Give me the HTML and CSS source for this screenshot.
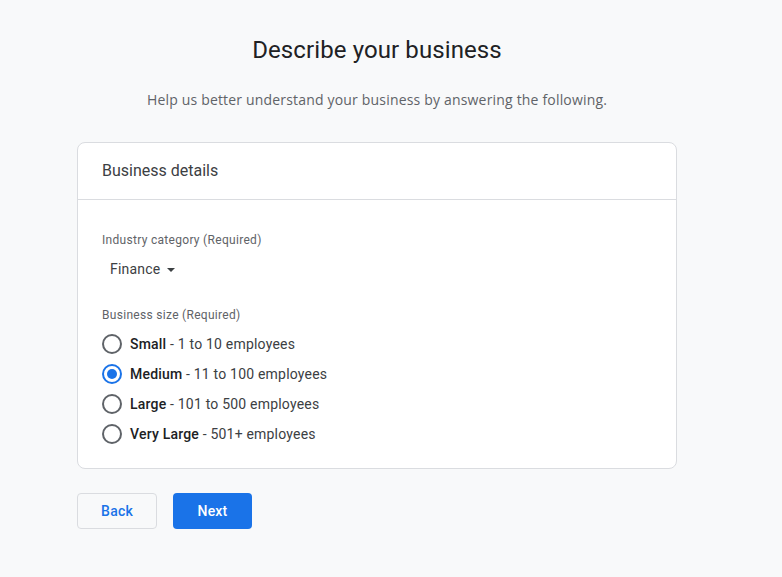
FILE: index.html
```html
<!DOCTYPE html>
<html>
<head>
<meta charset="utf-8">
<link rel="stylesheet" href="styles.css">
</head>
<body>
<main class="page">
  <h1 class="title">Describe your business</h1>
  <p class="subtitle">Help us better understand your business by answering the following.</p>
  <section class="card">
    <div class="card-header">Business details</div>
    <div class="card-body">
      <div class="label">Industry category (Required)</div>
      <div class="dropdown">Finance <span class="caret"></span></div>
      <div class="label label-size">Business size (Required)</div>
      <div class="radios">
        <label class="radio-row"><span class="radio"></span><span class="opt"><b>Small</b> - 1 to 10 employees</span></label>
        <label class="radio-row"><span class="radio checked"></span><span class="opt"><b>Medium</b> - 11 to 100 employees</span></label>
        <label class="radio-row"><span class="radio"></span><span class="opt"><b>Large</b> - 101 to 500 employees</span></label>
        <label class="radio-row"><span class="radio"></span><span class="opt"><b>Very Large</b> - 501+ employees</span></label>
      </div>
    </div>
  </section>
  <div class="actions">
    <button class="btn btn-back">Back</button>
    <button class="btn btn-next">Next</button>
  </div>
</main>
</body>
</html>
```
FILE: styles.css
```css
html, body {
  margin: 0;
  padding: 0;
  background: #f8f9fa;
  font-family: Roboto, "Liberation Sans", sans-serif;
  color: #202124;
}
.page {
  width: 600px;
  margin-left: 77px;
  padding-top: 34px;
}
.title {
  margin: 0;
  text-align: center;
  font-size: 24px;
  line-height: 32px;
  font-weight: 400;
  letter-spacing: 0.1px;
  color: #202124;
}
.subtitle {
  margin: 24px 0 0;
  text-align: center;
  font-family: "Open Sans", Roboto, sans-serif;
  font-size: 14px;
  line-height: 20px;
  letter-spacing: 0.18px;
  color: #5f6368;
}
.card {
  margin-top: 32px;
  background: #fff;
  border: 1px solid #dadce0;
  border-radius: 8px;
}
.card-header {
  padding: 16px 24px;
  font-size: 16px;
  line-height: 24px;
  color: #3c4043;
  border-bottom: 1px solid #dadce0;
}
.card-body {
  padding: 32px 24px 19px;
}
.label {
  font-size: 12px;
  line-height: 16px;
  letter-spacing: 0.3px;
  color: #5f6368;
}
.dropdown {
  display: flex;
  align-items: center;
  gap: 7px;
  margin-top: 11px;
  padding-left: 8px;
  font-size: 14px;
  line-height: 20px;
  letter-spacing: 0.2px;
  color: #3c4043;
}
.caret {
  width: 0;
  height: 0;
  border-left: 4px solid transparent;
  border-right: 4px solid transparent;
  border-top: 4px solid #3c4043;
  margin-top: 1px;
}
.label-size {
  margin-top: 28px;
}
.radios {
  margin-top: 5px;
  display: flex;
  flex-direction: column;
}
.radio-row {
  display: flex;
  align-items: center;
  gap: 8px;
  height: 30px;
  font-size: 14px;
  letter-spacing: 0.2px;
  color: #3c4043;
}
.radio-row:first-child {
  height: 31px;
}
.radio-row b {
  font-weight: 500;
  color: #202124;
}
.radio {
  box-sizing: border-box;
  width: 20px;
  height: 20px;
  border: 2px solid #5f6368;
  border-radius: 50%;
  display: flex;
  align-items: center;
  justify-content: center;
}
.radio.checked {
  border-color: #1a73e8;
}
.radio.checked::after {
  content: "";
  width: 10px;
  height: 10px;
  border-radius: 50%;
  background: #1a73e8;
}
.actions {
  display: flex;
  gap: 16px;
  margin-top: 24px;
}
.btn {
  height: 36px;
  border-radius: 4px;
  font-family: Roboto, "Liberation Sans", sans-serif;
  font-size: 14px;
  font-weight: 500;
  letter-spacing: 0.2px;
  padding: 0;
  cursor: pointer;
}
.btn-back {
  width: 80px;
  background: #f8f9fa;
  border: 1px solid #dadce0;
  color: #1a73e8;
}
.btn-next {
  width: 79px;
  background: #1a73e8;
  border: none;
  color: #fff;
}
```
